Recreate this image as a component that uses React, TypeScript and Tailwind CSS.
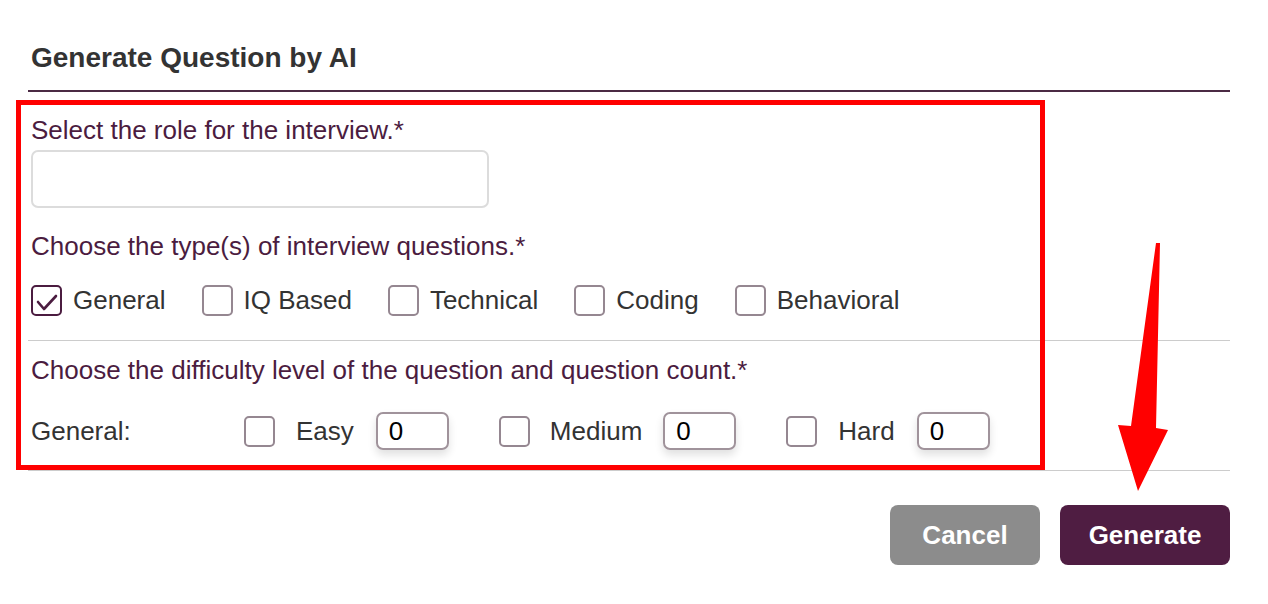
import { useState } from "react";

const purple = "#4b1c40";

function Check({ checked }: { checked?: boolean }) {
  return (
    <span
      className={`flex h-[31px] w-[31px] shrink-0 items-center justify-center rounded-[5px] border-2 ${
        checked ? "border-[#4b1c40]" : "border-[#958791]"
      }`}
    >
      {checked && (
        <svg width="31" height="31" viewBox="0 0 31 31" className="-m-[2px]">
          <polyline points="7,17 13,24 25,11" fill="none" stroke={purple} strokeWidth="2.6" strokeLinecap="round" strokeLinejoin="round" />
        </svg>
      )}
    </span>
  );
}

function CountInput() {
  return (
    <div className="flex h-[38px] w-[73px] items-center rounded-[7px] border-2 border-[#a0939b] pl-[11px] text-[26px] text-black shadow-[0_5px_8px_rgba(0,0,0,0.12)]">
      0
    </div>
  );
}

export default function App() {
  const [types] = useState([
    { name: "General", checked: true },
    { name: "IQ Based" },
    { name: "Technical" },
    { name: "Coding" },
    { name: "Behavioral" },
  ]);

  return (
    <div className="relative h-[604px] w-[1268px] overflow-hidden bg-white font-['Liberation_Sans',Arial,sans-serif]">
      <div className="ml-[28px] w-[1202px]">
        <div className="pt-[44px] pl-[3px] text-[28px] font-bold leading-[28px] text-[#333333]">Generate Question by AI</div>
        <div className="mt-[18px] h-[2px] bg-[#4b2a44]" />

        <div className="mt-[23px] pl-[3px] text-[26px] leading-[30px] text-[#4b1c40]">Select the role for the interview.*</div>
        <div className="mt-[5px] ml-[3px] h-[58px] w-[458px] rounded-[7px] border-2 border-[#dcdcdc]" />

        <div className="mt-[23px] pl-[3px] text-[26px] leading-[30px] text-[#4b1c40]">Choose the type(s) of interview questions.*</div>
        <div className="mt-[24px] flex h-[31px] items-center gap-[36px] pl-[3px]">
          {types.map((t) => (
            <label key={t.name} className="flex items-center gap-[11px] text-[26px] text-[#333333]">
              <Check checked={t.checked} />
              {t.name}
            </label>
          ))}
        </div>
        <div className="mt-[24px] h-px bg-[#cccccc]" />

        <div className="mt-[14px] pl-[3px] text-[26px] leading-[30px] text-[#4b1c40]">
          Choose the difficulty level of the question and question count.*
        </div>
        <div className="mt-[27px] flex h-[38px] items-center pl-[3px] text-[26px] text-[#333333]">
          <span className="w-[213px]">General:</span>
          <Check />
          <span className="ml-[21px]">Easy</span>
          <span className="ml-[22px]"><CountInput /></span>
          <span className="ml-[50px]"><Check /></span>
          <span className="ml-[20px]">Medium</span>
          <span className="ml-[21px]"><CountInput /></span>
          <span className="ml-[50px]"><Check /></span>
          <span className="ml-[21px]">Hard</span>
          <span className="ml-[22px]"><CountInput /></span>
        </div>
        <div className="mt-[20px] h-px bg-[#cccccc]" />

        <div className="mt-[34px] flex justify-end gap-[20px]">
          <button className="h-[60px] w-[150px] rounded-[8px] bg-[#8c8c8c] text-[26px] font-bold text-white">Cancel</button>
          <button className="h-[60px] w-[170px] rounded-[8px] bg-[#4f1d42] text-[26px] font-bold text-white">Generate</button>
        </div>
      </div>

      {/* annotation overlays */}
      <div className="pointer-events-none absolute left-[16px] top-[100px] h-[370px] w-[1029px] border-[5px] border-[#ff0000]" />
      <svg className="pointer-events-none absolute left-[1110px] top-[238px]" width="65" height="260" viewBox="0 0 65 260">
        <polygon points="46,5 50,5 46,190 58,192 28,253 8,187 21,188" fill="#ff0000" />
      </svg>
    </div>
  );
}
